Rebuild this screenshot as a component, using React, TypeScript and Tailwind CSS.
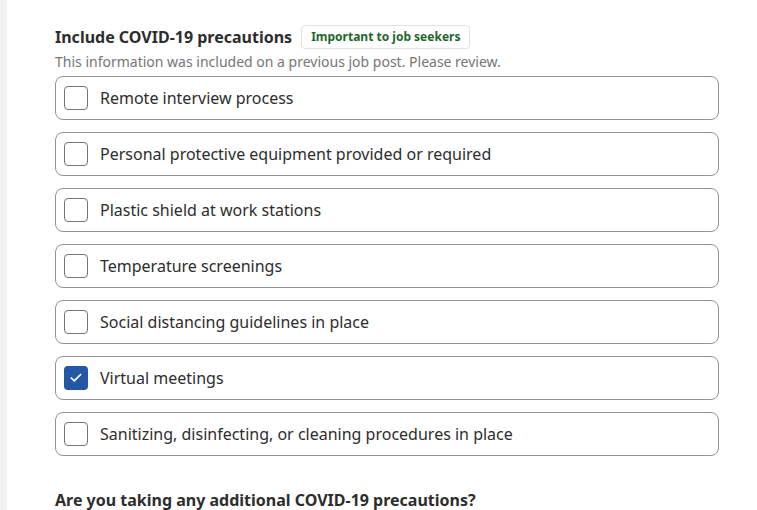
import { Check } from "lucide-react";

const options = [
  { label: "Remote interview process", checked: false },
  { label: "Personal protective equipment provided or required", checked: false },
  { label: "Plastic shield at work stations", checked: false },
  { label: "Temperature screenings", checked: false },
  { label: "Social distancing guidelines in place", checked: false },
  { label: "Virtual meetings", checked: true },
  { label: "Sanitizing, disinfecting, or cleaning procedures in place", checked: false },
];

export default function App() {
  return (
    <div
      className="flex h-[510px] w-[757px] overflow-hidden bg-white text-[#2d2d2d]"
      style={{ fontFamily: '"Noto Sans", "Open Sans", sans-serif' }}
    >
      <div className="w-[7px] shrink-0 bg-[#f3f2f1]"></div>
      <div className="w-[712px] pl-[48px] pt-[25px]">
        <div className="flex h-[24px] items-center gap-[9px]">
          <h2 className="text-[16px] font-bold leading-[24px]">Include COVID-19 precautions</h2>
          <span className="flex h-[24px] items-center rounded-[4px] border border-[#e4e2e0] px-[9px] text-[12px] font-bold text-[#1f662c]">
            Important to job seekers
          </span>
        </div>
        <p className="mt-[3px] text-[14px] leading-[20px] text-[#767676]">
          This information was included on a previous job post. Please review.
        </p>
        <div className="mt-[4px] flex flex-col gap-[12px]">
          {options.map((opt) => (
            <label
              key={opt.label}
              className="flex h-[44px] items-center gap-[12px] rounded-[8px] border border-[#949494] pl-[8px]"
            >
              {opt.checked ? (
                <span className="flex h-[24px] w-[24px] items-center justify-center rounded-[4px] bg-[#2557a7]">
                  <Check className="h-[14px] w-[14px] text-white" strokeWidth={3} />
                </span>
              ) : (
                <span className="h-[24px] w-[24px] rounded-[4px] border border-[#767676] bg-white"></span>
              )}
              <span className="text-[16px] leading-[24px] text-[#2d2d2d]">{opt.label}</span>
            </label>
          ))}
        </div>
        <h2 className="mt-[32px] text-[16px] font-bold leading-[24px]">
          Are you taking any additional COVID-19 precautions?
        </h2>
      </div>
    </div>
  );
}
